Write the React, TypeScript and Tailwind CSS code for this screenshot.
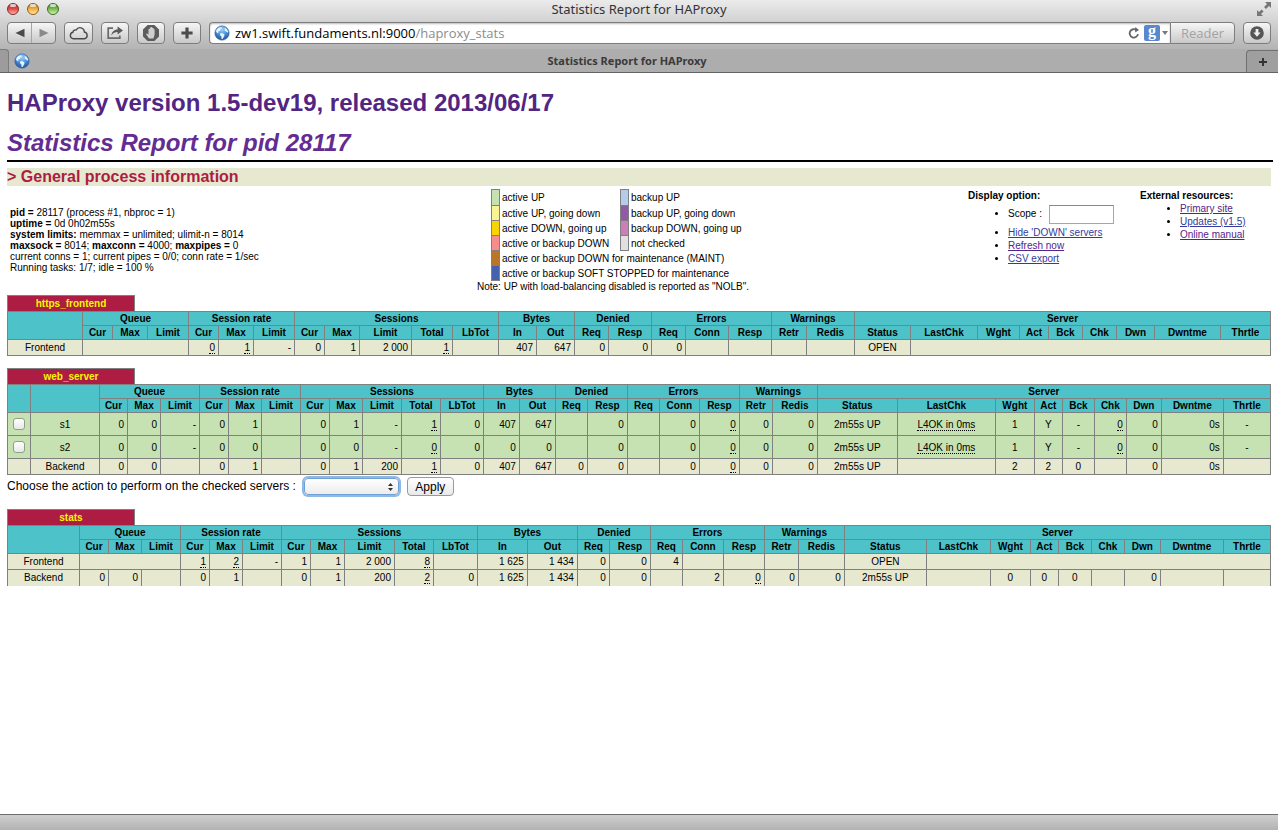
import React from "react";

type Cell = string | { t?: string; span?: number; c?: boolean; dot?: boolean };

const SANS = "font-['Liberation_Sans',Arial,sans-serif]";
const UI = "font-['Open_Sans','Noto_Sans',sans-serif]";
const TITLE = "font-['Noto_Sans',sans-serif]";

function Globe() {
  return (
    <svg viewBox="0 0 16 16" className="size-4 shrink-0">
      <defs>
        <radialGradient id="sea" cx="50%" cy="25%" r="78%">
          <stop offset="0" stopColor="#a4d0f5" />
          <stop offset="0.5" stopColor="#4a90d8" />
          <stop offset="1" stopColor="#1d4a90" />
        </radialGradient>
      </defs>
      <circle cx="8" cy="8" r="7.2" fill="url(#sea)" stroke="#2c5a9a" strokeWidth=".5" />
      <path d="M2.600 4.600 5 2.400l3 .2-.6 1.400-1.400.6.4 1-1.600 1L4 6.600l.6 1.400-1 .2L2 6.800zM6 8.400l2.200-.4 2.400 1.400-.6 2-1.400 2.600-1 .2-.2-2.600L6 10zM10.600 2.800l2 1.200 1.600 2.400-.6 1.400-1.400-1.400-1.400-.6z" fill="#e4f3ff" />
    </svg>
  );
}

const LIGHTS = [
  ["Close", "from-[#a93636] via-[#e04a4a] to-[#ffb0a6] border-[#7c2b2b]"],
  ["Minimize", "from-[#b9761d] via-[#f0b040] to-[#ffe89a] border-[#8a5c1e]"],
  ["Zoom", "from-[#46822c] via-[#7cbd50] to-[#cdf5a4] border-[#3f6b2c]"],
];

const TOOL =
  "flex h-[22px] items-center justify-center rounded-[4px] border border-[#7d7d7d] bg-linear-to-b from-[#f6f6f6] to-[#c9c9c9] text-[#4a4a4a]";

function Chrome() {
  return (
    <header className={`${UI} bg-linear-to-b from-[#ebebeb] to-[#b4b4b4] to-[49px]`}>
      <div className="grid h-[22px] grid-cols-[72px_1fr_72px] items-start px-[7px]">
        <div className="flex gap-2 pt-[3px]">
          {LIGHTS.map(([name, tone]) => (
            <button key={name} aria-label={name} className={`relative size-3 rounded-full border bg-linear-to-b ${tone}`}>
              <span className="absolute top-0 left-[2px] h-[3px] w-[6px] rounded-full bg-white/70" />
            </button>
          ))}
        </div>
        <h1 className={`${TITLE} text-center text-[13px] leading-[19px] text-[#333]`}>Statistics Report for HAProxy</h1>
        <button aria-label="Full screen" className="flex justify-end pt-[2px] text-[#777]">
          <svg viewBox="0 0 14 14" className="size-[14px]" fill="currentColor">
            <path d="M8 0h6v6l-2-2-3 3-2-2 3-3zM0 8l2 2 2.6-2.6 2 2L4 12l2 2H0z" />
          </svg>
        </button>
      </div>
      <div className="flex h-[27px] items-start px-[7px]">
        <div className={`${TOOL} w-[49px]`}>
          <button aria-label="Back" className="flex flex-1 justify-center">
            <svg viewBox="0 0 10 10" className="size-[10px]" fill="#4a4a4a"><path d="M9.5.8v8.4L.5 5z" /></svg>
          </button>
          <span className="h-5 w-px bg-[#a5a5a5]" />
          <button aria-label="Forward" className="flex flex-1 justify-center">
            <svg viewBox="0 0 10 10" className="size-[10px]" fill="#8a8a8a"><path d="M.5.8v8.4L9.5 5z" /></svg>
          </button>
        </div>
        <button aria-label="iCloud tabs" className={`${TOOL} ml-2 w-[29px]`}>
          <svg viewBox="0 0 20 14" className="h-[14px] w-5" fill="none" stroke="currentColor" strokeWidth="1.4">
            <path d="M4.4 12.800a3.300 3.300 0 0 1-.5-6.500 2.700 2.700 0 0 1 3.300-2.300A4.300 4.300 0 0 1 15.300 6a3.500 3.500 0 0 1 .3 6.800z" />
          </svg>
        </button>
        <button aria-label="Share" className={`${TOOL} ml-2 w-[28px]`}>
          <svg viewBox="0 0 18 14" className="h-[14px] w-[18px]" fill="none" stroke="#6a6a6a" strokeWidth="1.7">
            <path d="M7 2.2H2.2v10h11.6V9.4" />
            <path d="M5.4 9.4C5.8 5.8 8 3.4 11.6 3.4V.6L17 4.6l-5.4 4V6C9 6 7.2 7 5.4 9.4z" fill="#5a5a5a" stroke="none" />
          </svg>
        </button>
        <button aria-label="Block content" className={`${TOOL} ml-2 w-[28px]`}>
          <svg viewBox="0 0 18 18" className="size-[18px]">
            <path d="M5.600 1h6.800L17 5.600v6.800L12.400 17H5.600L1 12.400V5.600z" fill="#5c5c5c" />
            <path d="M7 14.600 4 10l1-.6 1.500 1.200V5h1.300V3.600h1.200V3h1.300v1h1.300v1.200h1v5.600L11.400 14.600z" fill="#cfcfcf" />
          </svg>
        </button>
        <button aria-label="Add bookmark" className={`${TOOL} ml-2 w-[28px]`}>
          <svg viewBox="0 0 12 12" className="size-3"><path d="M4.4.4h3.2v4h4v3.2h-4v4H4.4v-4h-4V4.4h4z" fill="#4c4c4c" /></svg>
        </button>
        <div className="ml-2 flex h-[22px] min-w-0 flex-1 items-center rounded-l-[4px] border border-r-0 border-[#7d7d7d] bg-white pl-1 shadow-[inset_0_1px_2px_#bbb]">
          <Globe />
          <span className="ml-[5px] flex-1 truncate text-[13px] leading-5 text-black">
            zw1.swift.fundaments.nl:9000<span className="text-[#8c8c8c]">/haproxy_stats</span>
          </span>
          <button aria-label="Reload" className="mr-1">
            <svg viewBox="0 0 12 12" className="size-3" fill="none" stroke="#666" strokeWidth="1.8">
              <path d="M10 7.2A4.2 4.2 0 1 1 8.6 3.2" /><path d="M7.2 0 11 3 7.2 5.6z" fill="#666" stroke="none" />
            </svg>
          </button>
          <span className="flex size-4 items-center justify-center rounded-[2px] bg-[#5b87cd] pb-1 font-['Liberation_Serif',serif] text-[16px] leading-4 font-bold text-white">g</span>
          <svg viewBox="0 0 6 4" className="mx-[2px] h-1 w-[6px]" fill="#777"><path d="M0 0h6L3 4z" /></svg>
        </div>
        <button className={`${TOOL} w-[65px] rounded-l-none text-[13px] leading-5 !text-[#a3a3a3]`}>Reader</button>
        <button aria-label="Downloads" className={`${TOOL} ml-2 w-[28px]`}>
          <svg viewBox="0 0 14 14" className="size-[14px]">
            <circle cx="7" cy="7" r="6.8" fill="#555" />
            <path d="M5.6 3h2.8v3.6h2.2L7 10.8 3.4 6.6h2.2z" fill="#eee" />
          </svg>
        </button>
      </div>
      <nav className="flex h-6 border-b border-[#636363] bg-[#adadad]">
        <div className="w-[9px] rounded-tr-[4px] border-t border-r border-[#7b7b7b] bg-[#9c9c9c]" />
        <div className="flex flex-1 items-center rounded-b-[4px] pl-[5px]">
          <Globe />
          <span className={`${TITLE} flex-1 pr-[22px] text-center text-[11px] leading-5 font-bold text-[#3a3a3a]`}>Statistics Report for HAProxy</span>
        </div>
        <button aria-label="New tab" className="mt-px flex w-8 items-center justify-center rounded-tl-[4px] border-t border-l border-[#717171] bg-[#9f9f9f]">
          <svg viewBox="0 0 8 8" className="size-2" stroke="#333" strokeWidth="2"><path d="M4 0v8M0 4h8" /></svg>
        </button>
      </nav>
    </header>
  );
}

const GROUPS: [string, string[]][] = [
  ["Queue", ["Cur", "Max", "Limit"]],
  ["Session rate", ["Cur", "Max", "Limit"]],
  ["Sessions", ["Cur", "Max", "Limit", "Total", "LbTot"]],
  ["Bytes", ["In", "Out"]],
  ["Denied", ["Req", "Resp"]],
  ["Errors", ["Req", "Conn", "Resp"]],
  ["Warnings", ["Retr", "Redis"]],
  ["Server", ["Status", "LastChk", "Wght", "Act", "Bck", "Chk", "Dwn", "Dwntme", "Thrtle"]],
];

const d = (t: string): Cell => ({ t, dot: true });
const c = (t: string): Cell => ({ t, c: true });
const gap = (span: number): Cell => ({ span });

const BORDER = "border border-[#808080]";

interface Row { name: string; up?: boolean; cells: Cell[] }
interface ProxyProps { title: string; cols: number[]; rows: Row[]; checks?: boolean; open?: boolean }

function Proxy({ title, cols, rows, checks, open }: ProxyProps) {
  const total = cols.reduce((a, b) => a + b, 0);
  return (
    <section className="text-[10px] leading-[13px] text-black">
      <h3 className={`${BORDER} h-4 w-32 border-b-0 bg-[#ad1c42] text-center leading-4 font-bold text-[#f6f600]`}>{title}</h3>
      <table className="w-full table-fixed border-collapse">
        <colgroup>
          {cols.map((w, i) => <col key={i} style={{ width: `${(w / total) * 100}%` }} />)}
        </colgroup>
        <thead className="bg-[#4dc3c9]">
          <tr className="h-[14px]">
            {checks && <th rowSpan={2} className={BORDER} aria-label="Select" />}
            <th rowSpan={2} className={BORDER} aria-label="Name" />
            {GROUPS.map(([g, subs]) => <th key={g} colSpan={subs.length} className={`${BORDER} p-0`}>{g}</th>)}
          </tr>
          <tr className="h-[14px]">
            {GROUPS.flatMap(([g, subs]) => subs.map((s) => <th key={g + s} className={`${BORDER} p-0`}>{s}</th>))}
          </tr>
        </thead>
        <tbody>
          {rows.map((r, ri) => {
            const edge = open && ri === rows.length - 1 ? "border-b-0" : "";
            let col = 0;
            return (
              <tr key={r.name} className={r.up ? "h-[23px] bg-[#c6e2b2]" : "h-4 bg-[#e6e8cf]"}>
                {checks && (
                  <td className={`${BORDER} p-0`}>
                    {r.up && (
                      <input
                        type="checkbox"
                        aria-label={`Select ${r.name}`}
                        className="mx-auto block size-3 appearance-none rounded-[3px] border border-[#8f9f85] bg-linear-to-b from-white to-[#e8e8e8]"
                      />
                    )}
                  </td>
                )}
                <td className={`${BORDER} ${edge} p-0 text-center`}>{r.name}</td>
                {r.cells.map((x, i) => {
                  const o = typeof x === "string" ? { t: x } : x;
                  const span = "span" in o ? o.span ?? 1 : 1;
                  const mid = ("c" in o && o.c) || col === 20;
                  col += span;
                  return (
                    <td key={i} colSpan={span} className={`${BORDER} ${edge} p-0 whitespace-nowrap ${mid ? "text-center" : "pr-[3px] text-right"}`}>
                      {"dot" in o && o.dot ? <span className="inline-block border-b border-dotted border-black leading-[10px]">{o.t}</span> : o.t}
                    </td>
                  );
                })}
              </tr>
            );
          })}
        </tbody>
      </table>
    </section>
  );
}

const lastChk: Cell = { t: "L4OK in 0ms", dot: true, c: true };

const LEGEND: [string, string, string?, string?][] = [
  ["bg-[#c6e2b2]", "active UP", "bg-[#b4cbea]", "backup UP"],
  ["bg-[#f8f494]", "active UP, going down", "bg-[#925aa6]", "backup UP, going down"],
  ["bg-[#f9d308]", "active DOWN, going up", "bg-[#ca80b6]", "backup DOWN, going up"],
  ["bg-[#f68c8c]", "active or backup DOWN", "bg-[#e0e0e0]", "not checked"],
  ["bg-[#bb7526]", "active or backup DOWN for maintenance (MAINT)"],
  ["bg-[#4662ae]", "active or backup SOFT STOPPED for maintenance"],
];

const BLUE = "text-[#333b9c] underline";
const VISITED = "text-[#552488] underline";

export default function App() {
  return (
    <div className={`${SANS} flex min-h-screen flex-col bg-white text-black`}>
      <Chrome />
      <main className="flex-1 px-[7px]">
        <h1 className="pt-[15px] text-[24px] leading-[30px] font-bold text-[#522583]">
          <a href="#home">HAProxy version 1.5-dev19, released 2013/06/17</a>
        </h1>
        <h2 className="mt-[10px] -mr-[2px] border-b-2 border-black pb-[2px] text-[24px] leading-[30px] font-bold text-[#632c92] italic">
          <a href="#report">Statistics Report for pid 28117</a>
        </h2>
        <h3 className="mt-[6px] h-[18px] bg-[#e6e8cf] text-[16px] leading-[18px] font-bold text-[#ad1c42]">&gt; General process information</h3>

        <div className="grid h-[109px] grid-cols-[470px_1fr_172px_131px] text-[10px] leading-[13px]">
          <p className="pt-[21px] pl-[3px] leading-[11px]">
            <b>pid = </b>28117 (process #1, nbproc = 1)<br />
            <b>uptime = </b>0d 0h02m55s<br />
            <b>system limits:</b> memmax = unlimited; ulimit-n = 8014<br />
            <b>maxsock = </b>8014; <b>maxconn = </b>4000; <b>maxpipes = </b>0<br />
            current conns = 1; current pipes = 0/0; conn rate = 1/sec<br />
            Running tasks: 1/7; idle = 100 %
          </p>
          <div className="pt-[3px]">
            <table className="ml-[14px] border-collapse">
              <tbody>
                {LEGEND.map(([a, at, b, bt]) => (
                  <tr key={at} className="h-[15px] first:h-4">
                    <td className={`${a} ${BORDER} w-2 min-w-2 p-0`} />
                    <td colSpan={b ? 1 : 3} className={`p-0 pl-[2px] whitespace-nowrap ${b ? "w-[121px]" : ""}`}>{at}</td>
                    {b && <td className={`${b} ${BORDER} w-2 min-w-2 p-0`} />}
                    {b && <td className="p-0 pl-[2px] whitespace-nowrap">{bt}</td>}
                  </tr>
                ))}
              </tbody>
            </table>
            <p className="leading-[11px]">Note: UP with load-balancing disabled is reported as "NOLB".</p>
          </div>
          <div className="pt-[3px]">
            <b>Display option:</b>
            <ul className="list-disc pl-10">
              <li className="h-6 leading-6">
                <label>Scope : <input className="ml-1 h-[19px] w-[65px] border border-[#a6a6a6] border-t-[#888] px-1 align-middle leading-4" /></label>
              </li>
              <li><a href="#hide" className={BLUE}>Hide 'DOWN' servers</a></li>
              <li><a href="#refresh" className={VISITED}>Refresh now</a></li>
              <li><a href="#csv" className={BLUE}>CSV export</a></li>
            </ul>
          </div>
          <div className="pt-[3px]">
            <b>External resources:</b>
            <ul className="list-disc pl-10">
              <li><a href="#site" className={VISITED}>Primary site</a></li>
              <li><a href="#updates" className={BLUE}>Updates (v1.5)</a></li>
              <li><a href="#manual" className={VISITED}>Online manual</a></li>
            </ul>
          </div>
        </div>

        <Proxy
          title="https_frontend"
          cols={[75, 30, 35, 41, 30, 35, 41, 30, 35, 52, 41, 46, 38, 38, 34, 43, 34, 43, 43, 35, 48, 56, 67, 42, 29, 34, 34, 38, 66, 50]}
          rows={[{ name: "Frontend", cells: [gap(3), d("0"), d("1"), "-", "0", "1", "2 000", d("1"), "", "407", "647", "0", "0", "0", "", "", "", "", c("OPEN"), gap(8)] }]}
        />
        <div className="h-3" />
        <Proxy
          title="web_server"
          checks
          cols={[23, 69, 28, 33, 39, 29, 33, 39, 29, 33, 39, 39, 43, 36, 36, 32, 40, 32, 40, 40, 33, 45, 80, 98, 39, 28, 32, 32, 35, 62, 47]}
          rows={[
            { name: "s1", up: true, cells: ["0", "0", "-", "0", "1", "", "0", "1", "-", d("1"), "0", "407", "647", "", "0", "", "0", d("0"), "0", "0", c("2m55s UP"), lastChk, c("1"), c("Y"), c("-"), d("0"), "0", "0s", c("-")] },
            { name: "s2", up: true, cells: ["0", "0", "-", "0", "0", "", "0", "0", "-", d("0"), "0", "0", "0", "", "0", "", "0", d("0"), "0", "0", c("2m55s UP"), lastChk, c("1"), c("Y"), c("-"), d("0"), "0", "0s", c("-")] },
            { name: "Backend", cells: ["0", "0", "", "0", "1", "", "0", "1", "200", d("1"), "0", "407", "647", "0", "0", "", "0", d("0"), "0", "0", c("2m55s UP"), "", c("2"), c("2"), c("0"), "", "0", "0s", ""] },
          ]}
        />
        <form className="flex h-[34px] items-start text-[12px] leading-[22px]" onSubmit={(e) => e.preventDefault()}>
          <label htmlFor="action">Choose the action to perform on the checked servers :</label>
          <span className="relative mt-[3px] ml-2">
            <select id="action" className="block h-[17px] w-[95px] appearance-none rounded-[4px] border border-[#6fa0d4] bg-linear-to-b from-white to-[#ececec] shadow-[0_0_0_2px_#8db9e4]" />
            <svg viewBox="0 0 5 8" className="pointer-events-none absolute top-[5px] right-[6px] h-2 w-[5px]" fill="#333"><path d="M0 3h5L2.500 0zM0 5h5L2.500 8z" /></svg>
          </span>
          <button className="mt-[2px] ml-2 h-[19px] w-[47px] rounded-[4px] border border-[#999] bg-linear-to-b from-white to-[#e9e9e9] leading-4">Apply</button>
        </form>
        <Proxy
          title="stats"
          open
          cols={[72, 29, 33, 39, 29, 33, 39, 29, 34, 50, 39, 44, 50, 50, 32, 41, 32, 41, 41, 34, 46, 82, 64, 40, 28, 33, 33, 36, 63, 47]}
          rows={[
            { name: "Frontend", cells: [gap(3), d("1"), d("2"), "-", "1", "1", "2 000", d("8"), "", "1 625", "1 434", "0", "0", "4", "", "", "", "", c("OPEN"), gap(8)] },
            { name: "Backend", cells: ["0", "0", "", "0", "1", "", "0", "1", "200", d("2"), "0", "1 625", "1 434", "0", "0", "", "2", d("0"), "0", "0", c("2m55s UP"), "", c("0"), c("0"), c("0"), "", "0", "", ""] },
          ]}
        />
      </main>
      <footer className="h-4 border-t border-[#6e6e6e] bg-linear-to-b from-[#cfcfcf] to-[#b2b2b2]" />
    </div>
  );
}
